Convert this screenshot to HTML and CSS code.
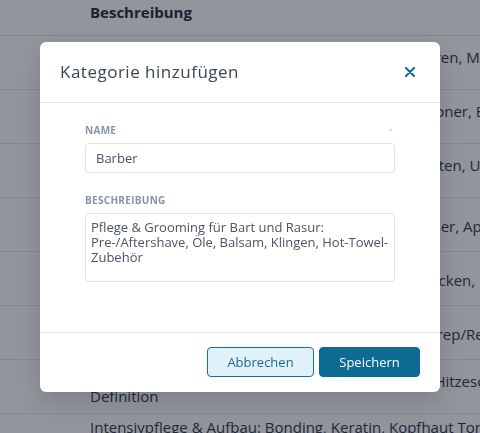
FILE: index.html
```html
<!DOCTYPE html>
<html lang="de">
<head>
  <meta charset="utf-8">
  <meta name="viewport" content="width=device-width, initial-scale=1">
  <title>Kategorien</title>
  <link rel="stylesheet" href="styles.css">
</head>
<body>
  <div class="list">
    <div class="list-head"><span>Beschreibung</span></div>
    <div class="list-row">
      <p>Professionelle Haarpflege: Shampoo, Spülung, Kuren, Masken<br>Seren</p>
    </div>
    <div class="list-row">
      <p>Pflege für lockiges Haar: Cremes, Leave-in Conditioner, Elixiere<br>Gele</p>
    </div>
    <div class="list-row">
      <p>Werkzeuge im Salon: Scheren, Kämme, Clips, Bürsten, Umhänge<br>Clips</p>
    </div>
    <div class="list-row">
      <p>Elektrogeräte: Fön, Glätteisen, Lockenstäbe, Diffuser, Apparate</p>
    </div>
    <div class="list-row">
      <p>Haarersatz: Zweithaare, Extensions, Tressen, Perücken, Locken</p>
    </div>
    <div class="list-row">
      <p>Nagelpflege: Nagellack, Gellack, Acryl, Feile, Nail-Prep/Remover</p>
    </div>
    <div class="list-row">
      <p>Styling: Gel, Wachs, Schaum, Haarsprays, Pasten, Hitzeschutz,<br>Definition</p>
    </div>
    <div class="list-row">
      <p>Intensivpflege &amp; Aufbau: Bonding, Keratin, Kopfhaut Tonikum<br>Ampullen, Seren<br>Treatments</p>
    </div>
  </div>

  <div class="overlay">
    <div class="modal">
      <div class="modal-head">
        <h2>Kategorie hinzufügen</h2>
        <button class="close" type="button" aria-label="Schließen">
          <svg width="10" height="10" viewBox="0 0 10 10"><path d="M1 1 L9 9 M9 1 L1 9" stroke="currentColor" stroke-width="2" stroke-linecap="round"/></svg>
        </button>
      </div>
      <div class="modal-body">
        <div class="field">
          <label for="name"><span>Name</span><span class="req">*</span></label>
          <input id="name" type="text" value="Barber">
        </div>
        <div class="field">
          <label for="desc"><span>Beschreibung</span></label>
          <textarea id="desc">Pflege &amp; Grooming für Bart und Rasur: Pre-/Aftershave, Öle, Balsam, Klingen, Hot-Towel-Zubehör</textarea>
        </div>
      </div>
      <div class="modal-foot">
        <button class="btn btn-light" type="button">Abbrechen</button>
        <button class="btn btn-primary" type="button">Speichern</button>
      </div>
    </div>
  </div>
</body>
</html>
```

FILE: styles.css
```css
body {
  margin: 0;
  background: #fff;
  font-family: "Open Sans", "Noto Sans", sans-serif;
  color: #374151;
  overflow: hidden;
  height: 433px;
}
.list {
  width: 100%;
}
.list-head {
  height: 35px;
  border-bottom: 1px solid #e5e7eb;
  padding-left: 90px;
  font-weight: 700;
  font-size: 15px;
  color: #1f2937;
}
.list-head span {
  display: block;
  line-height: 24px;
}
.list-row {
  height: 53px;
  border-bottom: 1px solid #e5e7eb;
  display: flex;
  align-items: center;
  padding-left: 90px;
  overflow: hidden;
}
.list-row p {
  margin: 0;
  white-space: nowrap;
  font-size: 15px;
  font-weight: 500;
  line-height: 15px;
  padding-top: 4px;
  color: #2d3748;
}

.overlay {
  position: fixed;
  inset: 0;
  background: rgba(17, 24, 39, 0.46);
  display: flex;
  align-items: center;
  justify-content: center;
}
.modal {
  width: 400px;
  background: #fff;
  border-radius: 6px;
  box-shadow: 0 10px 25px rgba(0, 0, 0, 0.15);
}
.modal-head {
  height: 60px;
  border-bottom: 1px solid #e5e7eb;
  display: flex;
  align-items: center;
  justify-content: space-between;
  padding: 0 20px;
}
.modal-head h2 {
  margin: 0;
  font-size: 17px;
  font-weight: 500;
  letter-spacing: 0.5px;
  color: #3b4656;
}
.close {
  border: 0;
  background: none;
  padding: 0;
  width: 20px;
  height: 20px;
  display: flex;
  align-items: center;
  justify-content: center;
  color: #0f6b94;
  cursor: pointer;
}
.modal-body {
  padding: 20px 45px 50px;
  display: flex;
  flex-direction: column;
  gap: 20px;
}
.field label {
  display: flex;
  justify-content: space-between;
  font-size: 10px;
  line-height: 14px;
  font-weight: 700;
  letter-spacing: 0.3px;
  text-transform: uppercase;
  color: #8793a6;
  margin-bottom: 6px;
}
.field .req {
  color: #c3c9d3;
  font-size: 8px;
  font-weight: 400;
  margin-right: 2px;
}
.field input,
.field textarea {
  display: block;
  width: 100%;
  box-sizing: border-box;
  border: 1px solid #dfe3e9;
  border-radius: 4px;
  font-family: inherit;
  font-size: 13px;
  color: #4a5466;
  outline: none;
}
.field input {
  height: 30px;
  padding: 0 10px;
}
.field textarea {
  height: 69px;
  padding: 6px 5px;
  line-height: 15px;
  resize: none;
}
.modal-foot {
  height: 59px;
  border-top: 1px solid #e5e7eb;
  display: flex;
  align-items: center;
  justify-content: flex-end;
  gap: 5px;
  padding: 0 20px;
}
.btn {
  height: 30px;
  border-radius: 4px;
  font-family: inherit;
  font-size: 13px;
  cursor: pointer;
}
.btn-light {
  width: 107px;
  background: #e1f1f9;
  border: 1px solid #16709b;
  color: #1c6b93;
}
.btn-primary {
  width: 101px;
  background: #0d6a92;
  border: 1px solid #0d6a92;
  color: #fff;
}
```
